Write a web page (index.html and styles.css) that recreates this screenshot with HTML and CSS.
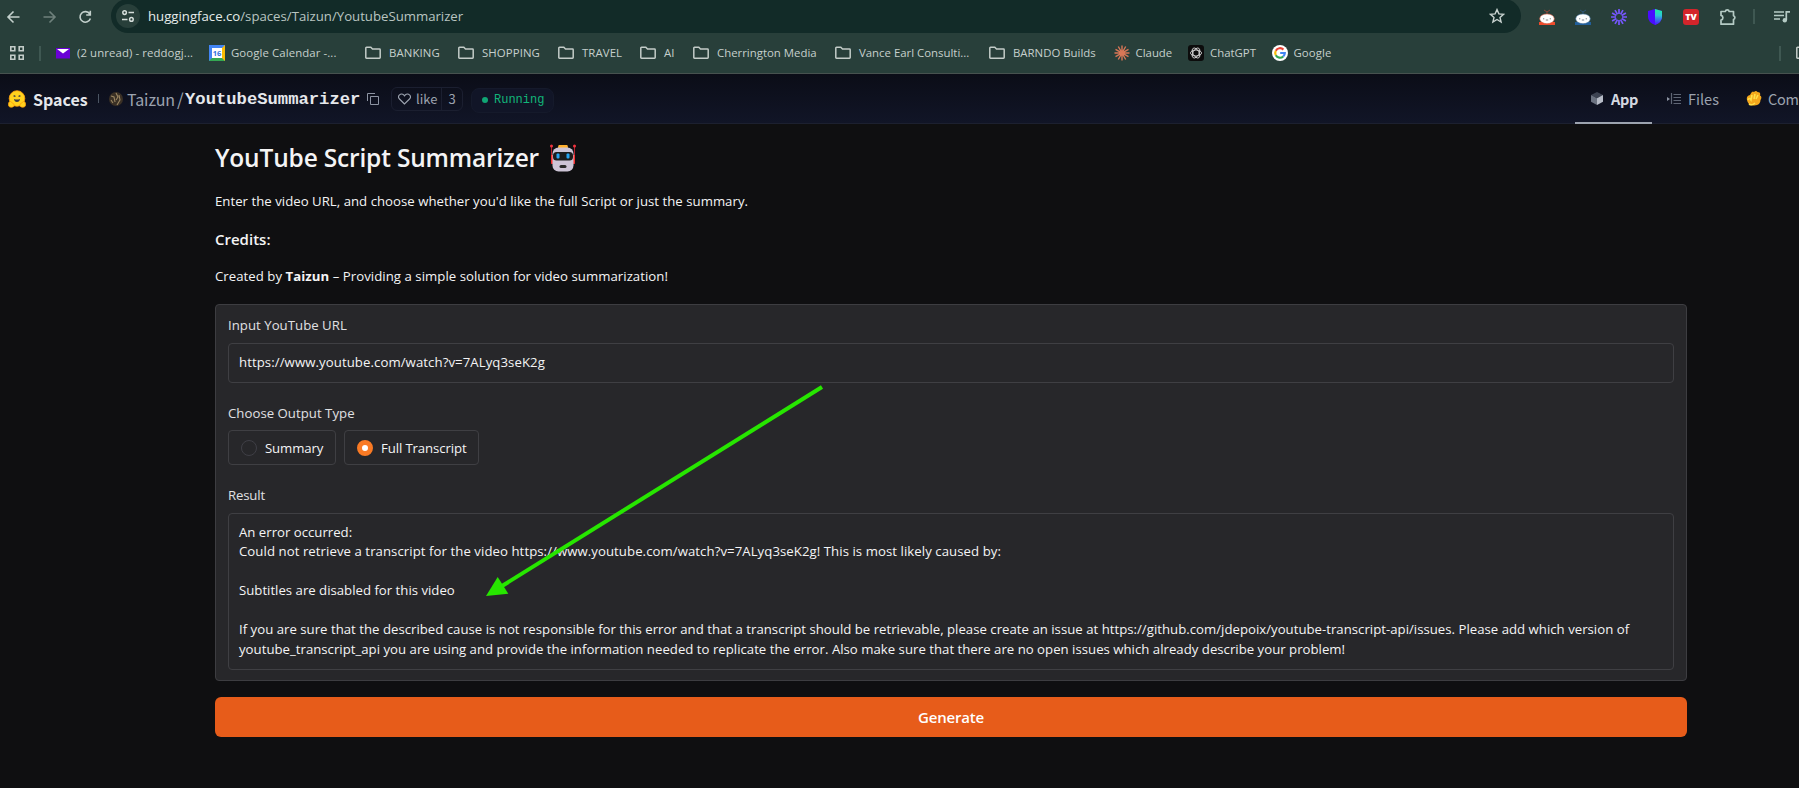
FILE: index.html
```html
<!DOCTYPE html>
<html lang="en">
<head>
<meta charset="utf-8">
<title>YoutubeSummarizer - a Hugging Face Space by Taizun</title>
<link rel="stylesheet" href="styles.css">
</head>
<body>
<svg class="defs" width="0" height="0">
  <symbol id="folder" viewBox="0 0 16 16"><path d="M.8 3q0-.7.7-.7h4.300l1.700 1.800h7q.7 0 .7.7v7.700q0 .7-.7.7h-13q-.7 0-.7-.7z" fill="none" stroke="#c3ccc8" stroke-width="1.500"/></symbol>
</svg>
<div class="browser">
  <div class="toolbar">
    <div class="nav">
      <svg width="16" height="16" viewBox="0 0 16 16"><path d="M13.500 8H3M7.500 2.500L2 8l5.500 5.500" fill="none" stroke="#c3d0cc" stroke-width="1.600"/></svg>
      <svg width="16" height="16" viewBox="0 0 16 16"><path d="M1.500 8H12M7.500 2.500L13 8l-5.500 5.500" fill="none" stroke="#6f817c" stroke-width="1.600"/></svg>
      <svg width="16" height="16" viewBox="0 0 16 16"><path d="M11.800 5A5.300 5.300 0 1 0 12.400 9.500M12.300 1.800V6H8.200" fill="none" stroke="#c3d0cc" stroke-width="1.600"/></svg>
    </div>
    <div class="omnibox">
      <span class="site"><svg width="14" height="14" viewBox="0 0 14 14" fill="none" stroke="#d5dedb" stroke-width="1.500"><circle cx="3.600" cy="3.600" r="1.800"/><path d="M7.500 3.600H13M1 10.400h5.500"/><circle cx="10.400" cy="10.400" r="1.800"/></svg></span>
      <span class="url">huggingface.co<span class="path">/spaces/Taizun/YoutubeSummarizer</span></span>
      <svg class="star" width="16" height="16" viewBox="0 0 16 16"><path d="M8 1.600l1.900 4.300 4.700.4-3.600 3.100 1.100 4.600L8 11.500 3.900 14 5 9.400 1.400 6.300l4.700-.4z" fill="none" stroke="#c9d3d0" stroke-width="1.400"/></svg>
    </div>
    <div class="exts">
      <svg width="16" height="16" viewBox="0 0 16 16"><path d="M5 1l3 2 3-2M8 2v3" stroke="#8c4638" fill="none"/><rect y="13" width="16" height="3" fill="#ef4b2b"/><ellipse cx="8" cy="9.800" rx="7.300" ry="4.900" fill="#fff" stroke="#d9573c" stroke-width=".6"/><path d="M4 9.800h1.300M10.700 9.800H12M6.800 11h2.400" stroke="#8a807e"/></svg>
      <svg width="16" height="16" viewBox="0 0 16 16"><path d="M5 1l3 2 3-2M8 2v3" stroke="#2f5477" fill="none"/><rect y="13" width="16" height="3" fill="#225f9b"/><ellipse cx="8" cy="9.800" rx="7.300" ry="4.900" fill="#fff" stroke="#3c6d9c" stroke-width=".6"/><path d="M4 9.800h1.300M10.700 9.800H12M6.800 11h2.400" stroke="#7b8390"/></svg>
      <svg width="16" height="16" viewBox="0 0 16 16" stroke="#7657ff" stroke-width="1.700"><path d="M8 0v5M8 11v5M0 8h5M11 8h5M1.100 4l4.300 2.500M10.600 9.500l4.300 2.500M4 1.100l2.500 4.300M9.500 10.600l2.500 4.300M12 1.100L9.500 5.400M6.500 10.600L4 14.900M14.900 4l-4.300 2.500M5.400 9.500L1.100 12"/></svg>
      <svg width="16" height="16" viewBox="0 0 16 16"><defs><linearGradient id="sh" x2="0" y2="1"><stop offset="0" stop-color="#1cf29a"/><stop offset=".4" stop-color="#2ec6d9"/><stop offset="1" stop-color="#4a12ff"/></linearGradient></defs><path d="M8 0l7 2v6q0 5-7 8-7-3-7-8V2z" fill="#4a0cff"/><path d="M8 0l7 2v6q0 5-7 8z" fill="url(#sh)"/></svg>
      <span class="tv">TV</span>
      <svg width="18" height="18" viewBox="0 0 18 18"><path d="M2 3.500h4.300a2 2 0 0 1 3.900 0h4.300v4.200a2 2 0 0 1 0 3.800v4.700H2v-4.100a2.400 2.400 0 0 0 0-4.700z" fill="none" stroke="#b5cbc5" stroke-width="1.700" stroke-linejoin="round"/></svg>
    </div>
    <i class="vbar"></i>
    <svg width="16" height="16" viewBox="0 0 16 16"><path d="M0 3h10M0 6.500h10M0 10h6" stroke="#b5cbc5" stroke-width="1.600"/><path d="M12.300 11V2.800H16" stroke="#b5cbc5" stroke-width="1.700" fill="none"/><circle cx="10.800" cy="11.300" r="2.200" fill="#b5cbc5"/></svg>
  </div>
  <div class="bookmarks">
    <svg width="14" height="14" viewBox="0 0 14 14" fill="none" stroke="#c3ccc8" stroke-width="1.600"><path d="M.8.800h4v4h-4zM9.200.800h4v4h-4zM.8 9.200h4v4h-4zM9.200 9.200h4v4h-4z"/></svg>
    <i class="vbar"></i>
    <div class="marks">
      <a><svg width="16" height="16" viewBox="0 0 16 16"><rect x="1" y="3" width="14" height="10.500" fill="#6a00d6"/><path d="M2 4h12L8 8.500z" fill="#fff"/></svg><span class="loose">(2 unread) - reddogj...</span></a>
      <a><span class="gcal">16</span><span class="loose">Google Calendar -...</span></a>
      <a class="dir"><svg width="16" height="16"><use href="#folder"/></svg><span class="loose">BANKING</span></a>
      <a class="dir"><svg width="16" height="16"><use href="#folder"/></svg><span class="loose">SHOPPING</span></a>
      <a class="dir"><svg width="16" height="16"><use href="#folder"/></svg><span class="loose">TRAVEL</span></a>
      <a class="dir"><svg width="16" height="16"><use href="#folder"/></svg><span>AI</span></a>
      <a class="dir"><svg width="16" height="16"><use href="#folder"/></svg><span>Cherrington Media</span></a>
      <a class="dir"><svg width="16" height="16"><use href="#folder"/></svg><span>Vance Earl Consulti...</span></a>
      <a class="dir"><svg width="16" height="16"><use href="#folder"/></svg><span>BARNDO Builds</span></a>
      <a><svg width="16" height="16" viewBox="0 0 16 16" stroke="#d97757" stroke-width="1.400"><path d="M8 .5v15M.5 8h15M4.300 1.500l7.400 13M11.700 1.500l-7.400 13M1.500 4.300l13 7.400M14.500 4.300l-13 7.400"/></svg><span>Claude</span></a>
      <a><svg width="16" height="16" viewBox="0 0 16 16"><rect width="16" height="16" rx="3" fill="#0c0c0c"/><g fill="none" stroke="#e8e8e8" stroke-width=".8"><ellipse cx="8" cy="8" rx="5.500" ry="3"/><ellipse cx="8" cy="8" rx="5.500" ry="3" transform="rotate(60 8 8)"/><ellipse cx="8" cy="8" rx="5.500" ry="3" transform="rotate(120 8 8)"/></g></svg><span>ChatGPT</span></a>
      <a><svg width="16" height="16" viewBox="0 0 16 16"><circle cx="8" cy="8" r="8" fill="#fff"/><g fill="none" stroke-width="2.200"><path d="M11.400 4.600A4.800 4.800 0 0 0 3.800 5.700" stroke="#ea4335"/><path d="M3.800 5.700a4.800 4.800 0 0 0 0 4.600" stroke="#fbbc05"/><path d="M3.800 10.300a4.800 4.800 0 0 0 7.400 1.200" stroke="#34a853"/><path d="M11.200 11.500A4.800 4.800 0 0 0 12.800 8H8.200" stroke="#4285f4"/></g></svg><span class="loose">Google</span></a>
    </div>
    <i class="vbar"></i>
    <svg class="last" width="16" height="16"><use href="#folder"/></svg>
  </div>
</div>

<header class="hf">
  <svg width="18" height="18" viewBox="0 0 18 18"><circle cx="9" cy="8.500" r="7.800" fill="#ffd21e" stroke="#ff9d0b" stroke-width=".8"/><path d="M6 9q3 1.200 6 0-.4 3-3 3T6 9z" fill="#3a3b45"/><path d="M5.600 6.300q1-1 1.600.4M10.800 6.700q.6-1.400 1.600-.4" stroke="#3a3b45" stroke-width="1.200" fill="none"/><path d="M.5 15.500q-.5-4 2-4l3.500 2.700q.8 3-3 3-2 0-2.500-1.700zM17.500 15.500q.5-4-2-4L12 14.200q-.8 3 3 3 2 0 2.500-1.700z" fill="#ffd21e" stroke="#ff9d0b" stroke-width=".8"/></svg>
  <b class="spaces">Spaces</b>
  <i class="sep"></i>
  <svg class="avatar" width="14" height="14" viewBox="0 0 14 14"><circle cx="7" cy="7" r="7" fill="#3a3025"/><path d="M2 4l3 1 1 5M7 1l2 4-2 3M10 3l1 5-3 5M4 11l-2-3" stroke="#9c8763" stroke-width="1.100" fill="none"/></svg>
  <span class="owner">Taizun</span>
  <span class="slash">/</span>
  <b class="repo">YoutubeSummarizer</b>
  <svg class="copy" width="12" height="12" viewBox="0 0 12 12" fill="none" stroke="#8d94a3"><path d="M3.500 3.500h8v8h-8zM.5 8V.5H8"/></svg>
  <div class="like"><span class="like-l"><svg width="13" height="12" viewBox="0 0 13 12"><path d="M6.500 11L1.500 6a2.900 2.900 0 0 1 0-4.100 2.900 2.900 0 0 1 4.200 0l.8.900.8-.9a2.900 2.900 0 0 1 4.200 0 2.900 2.900 0 0 1 0 4.100z" fill="none" stroke="#9ca3af" stroke-width="1.100"/></svg><span>like</span></span><span class="like-n">3</span></div>
  <div class="running"><i></i><span>Running</span></div>
  <nav class="tabs">
    <a class="tab on"><svg width="12" height="13" viewBox="0 0 12 13"><path d="M6 0l6 3-6 3.200L0 3z" fill="#3d4352"/><path d="M0 3l6 3.200V13L0 9.800z" fill="#6b7280"/><path d="M12 3L6 6.200V13l6-3.200z" fill="#b7bcc7"/></svg><span>App</span></a>
    <a class="tab files"><svg width="14" height="12" viewBox="0 0 14 12"><path d="M0 4l3 2-3 2z" fill="#8d94a3"/><path d="M4.500 0v11M6.500 1.500H14M6.500 4.500H14M6.500 7.500H14M6.500 10.500H14" stroke="#5f6675" stroke-width="1.200"/></svg><span>Files</span></a>
    <a class="tab com"><svg width="16" height="15" viewBox="0 0 16 15"><path d="M1 9q-1-4 3-5 2-5 4-3 2-2 3.500 0Q15 1 14 4.500q2.500 1 .5 4.500 0 5-6 5.500Q2 15 1 9z" fill="#f5a81c"/><path d="M2 9q1-3 3 0l1-5M8 8l1-5M10 8l2-4M3 13q3 2 6-1" stroke="#ffe04a" stroke-width="1.600" fill="none"/></svg><span>Com</span></a>
  </nav>
</header>

<main class="app">
  <h1><span class="title">YouTube Script Summarizer</span><svg width="26" height="28" viewBox="0 0 26 28"><path d="M1.500 2v18M24.500 2v18" stroke="#b71f2c" stroke-width="1"/><circle cx="1.500" cy="2" r="1.500" fill="#f0343f"/><circle cx="24.500" cy="2" r="1.500" fill="#f0343f"/><path d="M1 11h3v9H2.500Q1 20 1 18zM22 11h3v7q0 2-1.500 2H22z" fill="#f8312f"/><path d="M9 1h8q1 0 1 3H8q0-3 1-3z" fill="#ffb02e"/><rect x="2.500" y="3.500" width="21" height="24" rx="6" fill="#cdc4d6"/><rect x="3" y="8" width="20" height="8.500" rx="3.500" fill="#1c1c1c"/><rect x="6.500" y="9.500" width="3" height="5" rx="1" fill="#26a4f0"/><rect x="16.500" y="9.500" width="3" height="5" rx="1" fill="#26a4f0"/><rect x="9.500" y="21" width="7" height="3" rx="1.500" fill="#2a2a2a"/></svg></h1>
  <p class="intro">Enter the video URL, and choose whether you'd like the full Script or just the summary.</p>
  <h3>Credits:</h3>
  <p class="by">Created by <b>Taizun</b> – Providing a simple solution for video summarization!</p>
  <section class="panel">
    <div class="label">Input YouTube URL</div>
    <div class="input">https://www.youtube.com/watch?v=7ALyq3seK2g</div>
    <div class="label second">Choose Output Type</div>
    <div class="radios">
      <div class="radio summary"><i></i><span>Summary</span></div>
      <div class="radio full checked"><i></i><span>Full Transcript</span></div>
    </div>
    <div class="label second result-label">Result</div>
    <div class="result">
      <div>An error occurred:</div>
      <div class="cause">Could not retrieve a transcript for the video https://www.youtube.com/watch?v=7ALyq3seK2g! This is most likely caused by:</div>
      <div>&nbsp;</div>
      <div>Subtitles are disabled for this video</div>
      <div>&nbsp;</div>
      <div class="advice">If you are sure that the described cause is not responsible for this error and that a transcript should be retrievable, please create an issue at https://github.com/jdepoix/youtube-transcript-api/issues. Please add which version of</div>
      <div class="advice">youtube_transcript_api you are using and provide the information needed to replicate the error. Also make sure that there are no open issues which already describe your problem!</div>
    </div>
  </section>
  <div class="generate">Generate</div>
</main>
<svg class="arrow" width="1799" height="788"><path d="M822 387L502 586" stroke="#27e600" stroke-width="4"/><path d="M486 596l11.700-19 10.600 16.700z" fill="#27e600"/></svg>
</body>
</html>
```

FILE: styles.css
```css
* { box-sizing: border-box; }
body { margin: 0; width: 1799px; height: 788px; overflow: hidden; background: #0f0f11; color: #f4f4f5; font-family: "Open Sans", "Noto Sans", sans-serif; font-size: 13.2px; white-space: nowrap; }
.defs { position: absolute; }
svg { display: block; flex: none; }
.browser { height: 74px; background: #283f3a; border-bottom: 1px solid #47524f; }
.toolbar { height: 33px; display: flex; align-items: center; }
.nav { display: flex; gap: 20px; padding-left: 6px; width: 111px; }
.omnibox { width: 1410px; height: 34px; margin-top: -1px; border-radius: 17px; background: #122b28; display: flex; align-items: center; padding-left: 5px; }
.site { width: 24px; height: 24px; border-radius: 50%; background: #283f3a; display: flex; align-items: center; justify-content: center; }
.url { margin-left: 8px; font-size: 13.2px; color: #e6ecea; }
.path { color: #b9c5c1; }
.star { margin-left: auto; margin-right: 16px; }
.exts { display: flex; align-items: center; gap: 20px; padding-left: 18px; width: 232px; }
.tv { width: 16px; height: 16px; border-radius: 3px; background: #d3252b; color: #fff; font: 800 9px/16px "Open Sans", sans-serif; text-align: center; }
.vbar { width: 2px; height: 15px; background: #3f5852; flex: none; }
.toolbar > .vbar { margin-right: 19px; }
.bookmarks { height: 40px; display: flex; align-items: center; font-size: 11.4px; color: #c6cfcc; padding-left: 10px; }
.bookmarks .vbar { margin-left: 15px; }
.marks { flex: none; margin-left: 14px; width: 1724px; display: grid; grid-template-columns: 154px 156px 93px 100px 82px 53px 142px 154px 124.500px 74.500px 83.500px 70px; }
.marks a { display: flex; align-items: center; gap: 6px; line-height: 16px; }
.marks .dir { gap: 8px; }
.loose { letter-spacing: .09px; }
.bookmarks .marks + .vbar { margin-left: 0; }
.last { margin-left: 15px; }
.gcal { width: 16px; height: 16px; background: #fff; border: solid; border-width: 3px; border-color: #4285f4 #fbbc04 #34a853 #4285f4; color: #2f6fe0; font: 700 7.500px/10px "Open Sans", sans-serif; display: flex; justify-content: center; }
.hf { height: 50px; display: flex; align-items: center; background: linear-gradient(#0b0d17, #111527); border-bottom: 1px solid #1c2030; font-family: "Noto Sans CJK SC", "Open Sans", sans-serif; font-size: 16px; color: #9ca3af; padding-left: 8px; line-height: 24px; }
.spaces { width: 58px; margin-left: 7px; color: #e5e7eb; }
.sep { width: 1px; height: 9px; margin-left: 7px; background: #4b5563; }
.avatar { margin-left: 10px; }
.owner { width: 50px; margin-left: 4px; letter-spacing: -.1px; }
.slash { width: 8px; font-size: 17px; }
.repo { width: 177px; padding-top: 3px; font-family: "Liberation Mono", monospace; font-size: 17.200px; color: #e5e7eb; }
.copy { margin-left: 5px; }
.like { margin-left: 12px; width: 72px; height: 24px; display: flex; border: 1px solid #1b1f30; border-radius: 6px; font-size: 13px; line-height: 22px; }
.like-l { width: 51px; padding-left: 6px; display: flex; align-items: center; gap: 5px; border-right: 1px solid #1b1f30; }
.like-n { width: 20px; text-align: center; }
.running { margin: 3px 0 0 8px; width: 83px; height: 25px; border-radius: 8px; background: #111527; border: 1px solid #151a2b; display: flex; align-items: center; gap: 6px; padding-left: 10px; color: #12b57a; font-family: "Liberation Mono", monospace; font-size: 12px; }
.running i { width: 6px; height: 6px; border-radius: 50%; background: #10a574; }
.tabs { margin-left: auto; width: 224px; height: 50px; display: flex; font-size: 14.500px; }
.tab { display: flex; align-items: center; flex: none; gap: 8px; }
.on { width: 77px; padding: 2px 0 0 16px; border-bottom: 2px solid #9ca3af; color: #d5d9e0; font-weight: 700; letter-spacing: -.3px; }
.files { width: 94px; padding-left: 15px; gap: 7px; }
.com { gap: 6px; letter-spacing: -.3px; }
.app { margin-left: 215px; width: 1472px; padding-top: 17px; }
h1, h3, p { margin: 0; }
h1 { display: flex; height: 34px; font-size: 24.500px; font-weight: 600; line-height: 34px; gap: 11px; letter-spacing: -.173px; }
.title { width: 324px; }
h1 svg { margin-top: 3px; }
.intro { margin-top: 16px; line-height: 20px; letter-spacing: .022px; }
h3 { margin-top: 18px; font-size: 15px; font-weight: 600; line-height: 20px; }
.by { margin-top: 17px; line-height: 20px; letter-spacing: .042px; }
.panel { margin-top: 18px; height: 377px; border: 1px solid #3d3d41; border-radius: 4px; background: #27272a; padding: 10px 12px; }
.label { height: 20px; line-height: 20px; color: #e0e0e3; letter-spacing: .03px; }
.result-label { letter-spacing: -.16px; }
.second { margin-top: 20px; }
.input { margin-top: 8px; height: 40px; border: 1px solid #3f3f43; border-radius: 4px; padding-left: 10px; line-height: 36px; letter-spacing: .077px; }
.radios { margin-top: 7px; display: flex; gap: 8px; }
.radio { height: 35px; border: 1px solid #3f3f43; border-radius: 4px; display: flex; align-items: center; gap: 8px; padding-left: 12px; letter-spacing: -.11px; }
.summary { width: 108px; }
.full { width: 135px; }
.radio i { width: 16px; height: 16px; border: 1px solid #3f3f46; border-radius: 50%; }
.checked i { border: 5px solid #f97a24; background: #fff; }
.result { margin-top: 8px; height: 157px; border: 1px solid #3f3f43; border-radius: 4px; padding: 8.500px 10px 0; line-height: 19.600px; }
.cause { letter-spacing: .061px; }
.advice { letter-spacing: .012px; }
.generate { margin-top: 16px; height: 40px; border-radius: 6px; background: #e75c1a; text-align: center; font-size: 15px; font-weight: 600; line-height: 40px; color: #fff; letter-spacing: -.18px; }
.arrow { position: absolute; left: 0; top: 0; pointer-events: none; }
```
